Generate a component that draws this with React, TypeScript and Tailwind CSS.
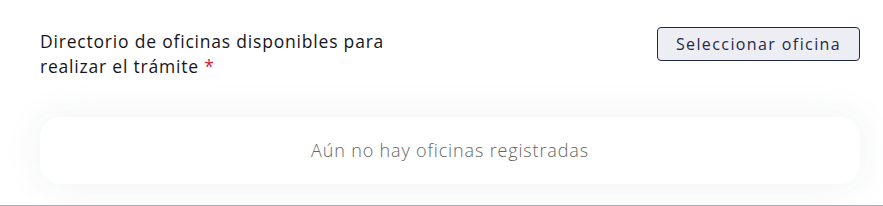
import React from "react";

const font = { fontFamily: '"Open Sans", "Noto Sans", sans-serif' };

export default function App() {
  return (
    <div className="w-[883px] h-[206px] bg-white border-b border-[#a9adb8] box-border" style={font}>
      <div className="pl-10 pr-[23px] pt-[27px]">
        <div className="flex items-start justify-between">
          <h2 className="w-[420px] text-[17.5px] leading-[25px] font-medium tracking-[0.8px] text-[#16161a] pt-[2px]">
            Directorio de oficinas disponibles para
            <br />
            realizar el trámite <span className="text-[#d0213a]">*</span>
          </h2>
          <button
            type="button"
            className="h-[34px] w-[203px] rounded-[4px] border border-[#1f2a48] bg-[#eceef3] text-[16px] font-medium tracking-[1.4px] text-[#1f2a48]"
          >
            Seleccionar oficina
          </button>
        </div>

        {/* Lista vacía */}
        <div className="mt-[38px] h-[67px] rounded-[20px] bg-white shadow-[0_0_40px_rgba(40,50,90,0.07)] flex items-center justify-center">
          <p className="text-[18px] font-light tracking-[0.85px] text-[#666]">Aún no hay oficinas registradas</p>
        </div>
      </div>
    </div>
  );
}
